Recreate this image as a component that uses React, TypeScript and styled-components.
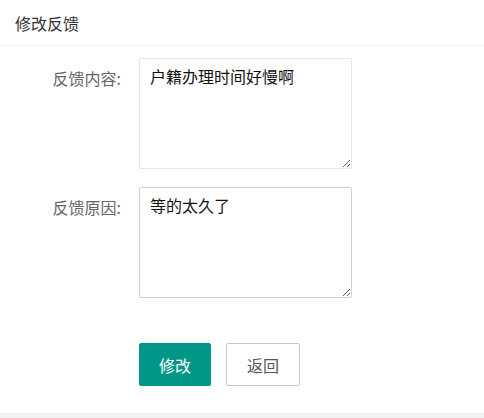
import React from "react";
import styled, { createGlobalStyle } from "styled-components";

const Global = createGlobalStyle`
  html, body { margin: 0; padding: 0; background: #f2f2f2; }
  body { font-family: "Noto Sans CJK SC", "Liberation Sans", sans-serif; }
  * { box-sizing: border-box; }
  textarea::spelling-error, textarea::grammar-error {
    color: inherit;
    background: none;
    text-decoration: none;
  }
`;

const Card = styled.div`
  background: #ffffff;
  height: 413px;
`;

const Header = styled.div`
  height: 46px;
  padding: 0 15px;
  display: flex;
  align-items: center;
  border-bottom: 1px solid #f3f3f3;
  font-size: 16px;
  color: #333;
`;

const Form = styled.form`
  padding-top: 12px;
  display: flex;
  flex-direction: column;
  gap: 18px;
`;

const Row = styled.div`
  display: flex;
  align-items: flex-start;
`;

const Label = styled.label`
  width: 139px;
  padding: 8px 18px 0 0;
  text-align: right;
  font-size: 16px;
  line-height: 24px;
  color: #666;
`;

const Area = styled.textarea<{ $border: string }>`
  width: 213px;
  height: 111px;
  border: 1px solid ${(p) => p.$border};
  border-radius: 2px;
  padding: 5px 10px;
  font-family: "Noto Sans CJK SC", sans-serif;
  font-size: 16px;
  line-height: 24px;
  color: #111;
  background: #fff;
  outline: none;
  resize: both;
`;

const Actions = styled.div`
  display: flex;
  gap: 15px;
  padding-left: 139px;
  margin-top: 27px;
`;

const Button = styled.button<{ $primary?: boolean }>`
  height: 43px;
  padding: 0;
  white-space: nowrap;
  font-family: inherit;
  font-size: 16px;
  border-radius: 2px;
  cursor: pointer;
  border: 1px solid ${(p) => (p.$primary ? "#009688" : "#c9c9c9")};
  background: ${(p) => (p.$primary ? "#009688" : "#fff")};
  color: ${(p) => (p.$primary ? "#fff" : "#555")};
  width: ${(p) => (p.$primary ? "72px" : "74px")};
`;

export default function App() {
  return (
    <>
      <Global />
      <Card lang="zh-CN">
        <Header>修改反馈</Header>
        <Form onSubmit={(e) => e.preventDefault()}>
          <Row>
            <Label>反馈内容:</Label>
            <Area $border="#e6e6e6" spellCheck={false} autoComplete="off" autoCorrect="off" defaultValue="户籍办理时间好慢啊" />
          </Row>
          <Row>
            <Label>反馈原因:</Label>
            <Area $border="#d2d2d2" spellCheck={false} autoComplete="off" autoCorrect="off" defaultValue="等的太久了" />
          </Row>
          <Actions>
            <Button $primary type="submit">修改</Button>
            <Button type="button">返回</Button>
          </Actions>
        </Form>
      </Card>
    </>
  );
}
